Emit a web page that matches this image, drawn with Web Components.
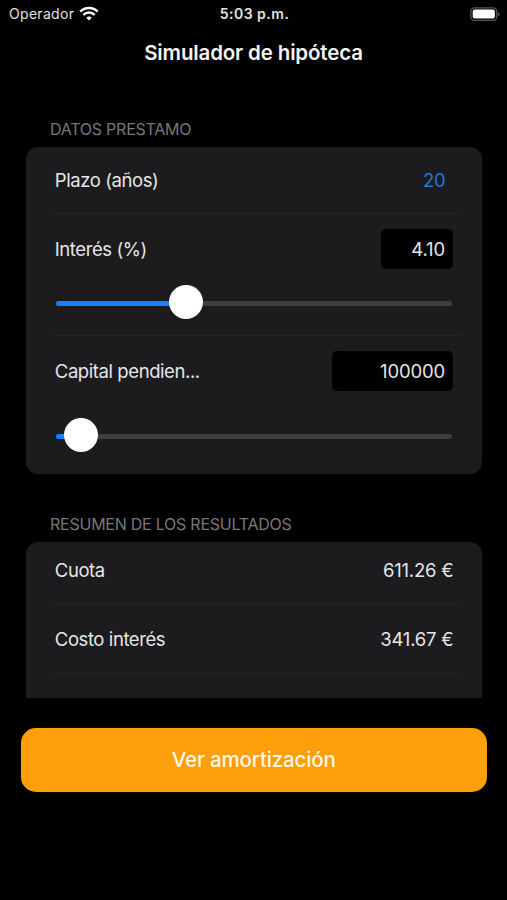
<!DOCTYPE html>
<html lang="es">
<head>
<meta charset="utf-8">
<meta name="viewport" content="width=device-width, initial-scale=1">
<title>Simulador de hipóteca</title>
<style>
    html, body { margin: 0; height: 100%; background: #000; }
    body { overflow: hidden; font-family: Inter, "Liberation Sans", sans-serif; color: #e6e6e6; }
</style>
</head>
<body>
<mortgage-app>
    <status-bar slot="status" carrier="Operador" time="5:03 p.m."></status-bar>
    <span slot="title">Simulador de hipóteca</span>

    <form-section heading="DATOS PRESTAMO">
        <form-row style="height: 66px" label="Plazo (años)"><value-text tint>20</value-text></form-row>
        <form-row style="height: 121px" label="Interés (%)">
            <number-field style="width: 72px">4.10</number-field>
            <range-slider slot="below" value="0.312"></range-slider>
        </form-row>
        <form-row style="height: 138px" class="last" label="Capital pendien...">
            <number-field style="width: 121px">100000</number-field>
            <range-slider slot="below" value="0.024" style="margin-top: 27px"></range-slider>
        </form-row>
    </form-section>

    <form-section heading="RESUMEN DE LOS RESULTADOS" class="results">
        <form-row style="height: 68px" label="Cuota"><value-text>611.26 €</value-text></form-row>
        <form-row style="height: 68px" label="Costo interés"><value-text>341.67 €</value-text></form-row>
        <form-row style="height: 68px" label=""></form-row>
    </form-section>

    <action-button slot="footer">Ver amortización</action-button>
</mortgage-app>

<script>
class MortgageApp extends HTMLElement {
    constructor() {
        super();
        this.attachShadow({ mode: 'open' });
        this.shadowRoot.innerHTML = `
            <style>
                :host { display: flex; flex-direction: column; width: 507px; height: 900px; background: #000; }
                h1 {
                    margin: 0; height: 48px; line-height: 49px; text-align: center;
                    font-size: 20.5px; font-weight: 570; letter-spacing: -0.15px; color: #f4f4f4;
                }
                main { height: 622px; overflow: hidden; padding: 0 25px 0 25.5px; box-sizing: border-box; }
                footer { padding: 29.5px 20px 0 20.5px; }
            </style>
            <slot name="status"></slot>
            <h1><slot name="title"></slot></h1>
            <main><slot></slot></main>
            <footer><slot name="footer"></slot></footer>
        `;
    }
}

class StatusBar extends HTMLElement {
    constructor() {
        super();
        this.attachShadow({ mode: 'open' });
        this.shadowRoot.innerHTML = `
            <style>
                :host {
                    display: grid; grid-template-columns: 1fr auto 1fr; align-items: center;
                    height: 27px; padding: 0 7px 1px 9px; font-size: 14px; color: #e2e2e2;
                }
                .left { display: flex; align-items: center; gap: 5px; }
                .carrier { letter-spacing: 0.3px; }
                .time { font-weight: 600; letter-spacing: 0.5px; }
                .battery { justify-self: end; }
                svg { display: block; }
            </style>
            <div class="left">
                <span class="carrier"></span>
                <svg class="wifi" width="20" height="15" viewBox="0 0 20 15" fill="none" stroke="#fff" stroke-width="2.5">
                    <path d="M1.3 5.6a12.3 12.3 0 0 1 17.4 0"/>
                    <path d="M4.4 8.8a7.9 7.9 0 0 1 11.2 0"/>
                    <path d="M10 14.6l-2.7-2.8a3.8 3.8 0 0 1 5.4 0z" fill="#fff" stroke="none"/>
                </svg>
            </div>
            <span class="time"></span>
            <svg class="battery" width="30" height="14" viewBox="0 0 30 14">
                <rect x="0.9" y="0.8" width="25.8" height="12.6" rx="3.6" fill="none" stroke="#58585a" stroke-width="1.3"/>
                <rect x="2.7" y="2.6" width="22.2" height="9" rx="2" fill="#fff"/>
                <path d="M27.9 5v4.4c1.1-.4 1.7-1.3 1.7-2.2s-.6-1.8-1.7-2.2z" fill="#58585a"/>
            </svg>
        `;
    }

    connectedCallback() {
        this.shadowRoot.querySelector('.carrier').textContent = this.getAttribute('carrier');
        this.shadowRoot.querySelector('.time').textContent = this.getAttribute('time');
    }
}

class FormSection extends HTMLElement {
    constructor() {
        super();
        this.attachShadow({ mode: 'open' });
        this.shadowRoot.innerHTML = `
            <style>
                :host { display: block; }
                h2 {
                    margin: 0; height: 20px; line-height: 20px; padding: 43px 0 8px 24.5px;
                    font-size: 16px; font-weight: 400; letter-spacing: -0.24px; color: #77777a;
                }
                .card { background: #1c1c1e; border-radius: 12px; overflow: hidden; }
                :host(.results) h2 { padding-top: 40px; }
                /* the first row has less space above its text */
                :host(.results) ::slotted(form-row:first-child) { margin-top: -6px; }
            </style>
            <h2></h2>
            <div class="card"><slot></slot></div>
        `;
    }

    connectedCallback() {
        this.shadowRoot.querySelector('h2').textContent = this.getAttribute('heading');
    }
}

class FormRow extends HTMLElement {
    constructor() {
        super();
        this.attachShadow({ mode: 'open' });
        this.shadowRoot.innerHTML = `
            <style>
                :host { display: block; margin: 0 21px 0 26px; border-bottom: 1px solid #252527; }
                :host(.last) { border-bottom: 0; }
                .line { display: flex; align-items: center; justify-content: space-between; height: 100%; padding: 0 8.5px 0 3.3px; }
                .line.top { height: 40px; padding-top: 15px; }
                .label { font-size: 18.5px; letter-spacing: -0.42px; white-space: nowrap; }
                ::slotted(range-slider) { margin: 16px 9px 0 4.5px; }
            </style>
            <div class="line">
                <span class="label"></span>
                <slot></slot>
            </div>
            <slot name="below"></slot>
        `;
    }

    connectedCallback() {
        this.shadowRoot.querySelector('.label').textContent = this.getAttribute('label');
        // Rows with a slider keep the text line at the top instead of centering it.
        if (this.querySelector('[slot="below"]')) {
            this.shadowRoot.querySelector('.line').classList.add('top');
        }
    }
}

class ValueText extends HTMLElement {
    constructor() {
        super();
        this.attachShadow({ mode: 'open' });
        this.shadowRoot.innerHTML = `
            <style>
                :host { display: block; margin-right: -1px; font-size: 18.5px; letter-spacing: -0.2px; }
                :host([tint]) { color: #1f78d8; padding-right: 8px; }
            </style>
            <slot></slot>
        `;
    }
}

class NumberField extends HTMLElement {
    constructor() {
        super();
        this.attachShadow({ mode: 'open' });
        this.shadowRoot.innerHTML = `
            <style>
                :host {
                    display: block; box-sizing: border-box; height: 40px; line-height: 40px; padding-right: 7.5px;
                    background: #000; border-radius: 5px; text-align: right; font-size: 18.5px; letter-spacing: -0.15px;
                }
            </style>
            <slot></slot>
        `;
    }
}

class RangeSlider extends HTMLElement {
    constructor() {
        super();
        this.attachShadow({ mode: 'open' });
        this.shadowRoot.innerHTML = `
            <style>
                :host { display: flex; align-items: center; height: 36px; }
                .fill, .rest { flex-basis: 0; height: 5px; }
                .fill { background: #0f83fb; border-radius: 2.5px 0 0 2.5px; }
                .rest { background: #3e3e40; border-radius: 0 2.5px 2.5px 0; }
                .thumb {
                    flex: none; width: 34px; height: 34px; margin: 0 -1px 2px; border-radius: 50%;
                    background: #fff; z-index: 1;
                }
            </style>
            <div class="fill"></div>
            <div class="thumb"></div>
            <div class="rest"></div>
        `;
    }

    connectedCallback() {
        const value = parseFloat(this.getAttribute('value')) || 0;
        this.shadowRoot.querySelector('.fill').style.flexGrow = value;
        this.shadowRoot.querySelector('.rest').style.flexGrow = 1 - value;
    }
}

class ActionButton extends HTMLElement {
    constructor() {
        super();
        this.attachShadow({ mode: 'open' });
        this.shadowRoot.innerHTML = `
            <style>
                :host { display: block; }
                button {
                    display: block; width: 100%; height: 64px; border: 0; border-radius: 15px; padding: 0;
                    background: #ff9f0b; color: #fff6e4; font: 550 20.5px Inter, "Liberation Sans", sans-serif;
                    letter-spacing: -0.15px;
                }
            </style>
            <button><slot></slot></button>
        `;
    }
}

customElements.define('mortgage-app', MortgageApp);
customElements.define('status-bar', StatusBar);
customElements.define('form-section', FormSection);
customElements.define('form-row', FormRow);
customElements.define('value-text', ValueText);
customElements.define('number-field', NumberField);
customElements.define('range-slider', RangeSlider);
customElements.define('action-button', ActionButton);
</script>
</body>
</html>
